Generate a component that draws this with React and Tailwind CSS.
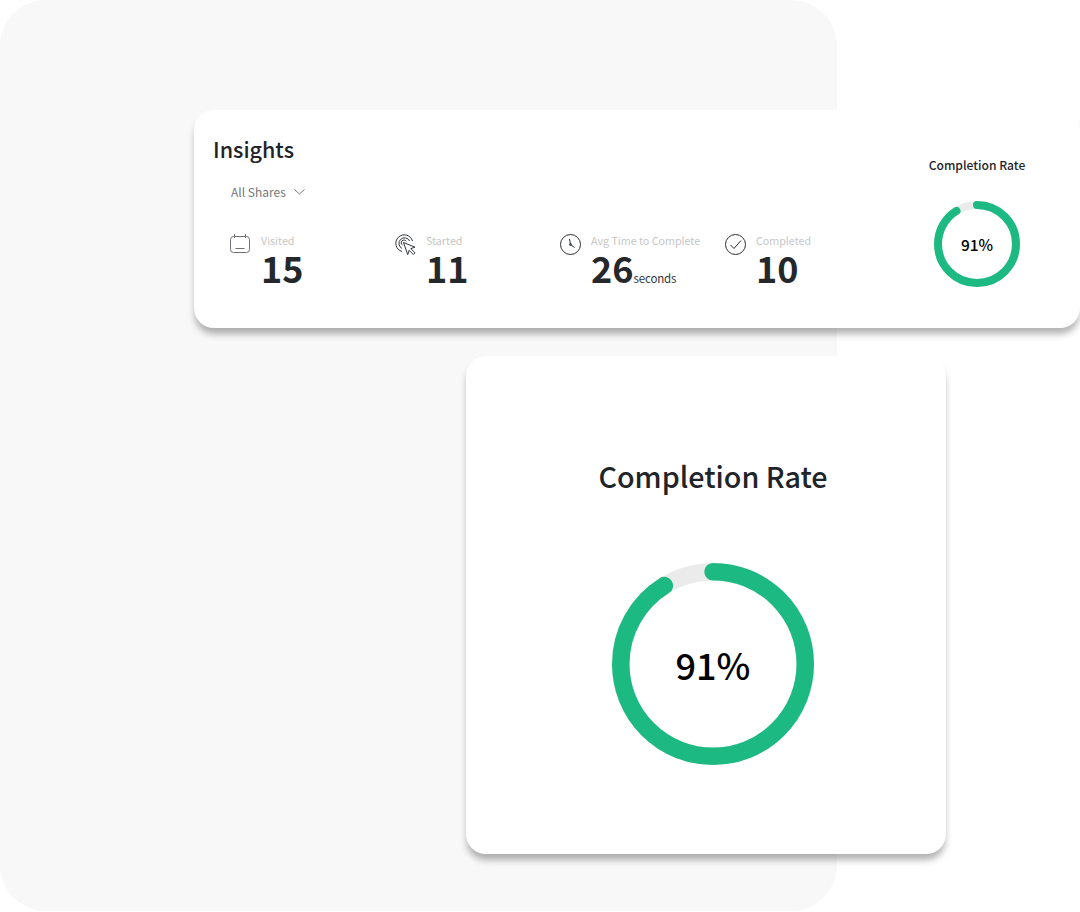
const font = { fontFamily: '"Noto Sans CJK JP", "Noto Sans", sans-serif' };

function CalendarIcon() {
  return (
    <svg width="22" height="20" viewBox="0 0 22 20" fill="none" stroke="#6b6f73" strokeWidth="1">
      <rect x="0.5" y="2.5" width="19" height="16" rx="3" />
      <path d="M4.5 0v4M15.5 0v4M5.5 14.5h9" />
    </svg>
  );
}

function PointerIcon() {
  return (
    <svg width="22" height="22" viewBox="0 0 22 22" fill="none" stroke="#33373b" strokeWidth="1">
      <path d="M7 17.5A8.5 8.5 0 1 1 17.5 7" />
      <path d="M7 14.4A5.6 5.6 0 1 1 14.6 7" />
      <path d="M7.5 11.2A2.8 2.8 0 1 1 11.4 7.4" />
      <path d="M8.5 8.5l11.5 4.7-4.3 1.4 4.3 4.2-1.7 1.7-4.2-4.2-1.4 4.3z" fill="#fff" strokeLinejoin="round" />
    </svg>
  );
}

function ClockIcon() {
  return (
    <svg width="22" height="22" viewBox="0 0 22 22" fill="none" stroke="#2b2f33" strokeWidth="1">
      <circle cx="10.5" cy="10.5" r="10" />
      <path d="M9.5 5l1 5.5 4 3" />
      <circle cx="10.5" cy="10.5" r="1" />
    </svg>
  );
}

function CheckIcon() {
  return (
    <svg width="22" height="22" viewBox="0 0 22 22" fill="none" stroke="#2b2f33" strokeWidth="1">
      <circle cx="10.5" cy="10.5" r="10" />
      <path d="M5.5 11l3.5 3.5 7-8" />
    </svg>
  );
}

function Ring({ size, stroke }) {
  const r = (size - stroke) / 2;
  const c = 2 * Math.PI * r;
  return (
    <svg width={size} height={size} viewBox={`0 0 ${size} ${size}`} fill="none" className="-rotate-90">
      <circle cx={size / 2} cy={size / 2} r={r} stroke="#ebebeb" strokeWidth={stroke} />
      <circle
        cx={size / 2}
        cy={size / 2}
        r={r}
        stroke="#1cb983"
        strokeWidth={stroke}
        strokeLinecap="round"
        strokeDasharray={`${c * 0.91} ${c}`}
      />
    </svg>
  );
}

function Stat({ icon, label, value, unit }) {
  return (
    <div className="flex w-[165px] gap-[9px]">
      <div className="w-[22px] pt-[1px] shrink-0">{icon}</div>
      <div className="flex flex-col">
        <span className="text-[10.7px] leading-[16px] text-[#c6c6c6] whitespace-nowrap">{label}</span>
        <span className="flex items-baseline text-[36px] leading-[36px] font-bold text-[#25282b]">
          {value}
          {unit && <span className="text-[11.5px] leading-[16px] font-normal tracking-[-0.15px] text-[#33373b]">{unit}</span>}
        </span>
      </div>
    </div>
  );
}

export default function App() {
  return (
    <div className="relative w-[1080px] h-[912px] overflow-hidden bg-white" style={font}>
      {/* grey backdrop */}
      <div className="absolute left-0 top-0 w-[837px] h-[911px] rounded-[46px] bg-[#f8f8f8]" />

      <div className="relative flex flex-col pt-[110px]">
        {/* Insights card */}
        <div className="ml-[194px] w-[886px] h-[218px] flex rounded-[20px] bg-white shadow-[0_7px_7px_-1px_rgba(0,0,0,0.3)]">
          <div className="flex-1 pl-[19px] pt-[23px]">
            <h2 className="text-[21.5px] leading-[32px] font-medium text-[#1f2429]">Insights</h2>
            <div className="flex items-center gap-[8px] ml-[18px] mt-[17px] text-[12px] leading-[20px] text-[#73777b]">
              All Shares
              <svg width="11" height="6" viewBox="0 0 11 6" fill="none" stroke="#73777b" strokeWidth="1">
                <path d="M.5.5l5 4.5 5-4.5" />
              </svg>
            </div>
            <div className="flex ml-[17px] mt-[31px]">
              <Stat icon={<CalendarIcon />} label="Visited" value="15" />
              <Stat icon={<PointerIcon />} label="Started" value="11" />
              <Stat icon={<ClockIcon />} label="Avg Time to Complete" value="26" unit="seconds" />
              <Stat icon={<CheckIcon />} label="Completed" value="10" />
            </div>
          </div>
          <div className="w-[206px] flex flex-col items-center pt-[46px] pr-[16px]">
            <span className="text-[12.1px] leading-[18px] font-medium text-[#1f2429]">Completion Rate</span>
            <div className="relative mt-[27px]">
              <Ring size={86} stroke={8} />
              <span className="absolute inset-0 pt-[1px] flex items-center justify-center text-[15.5px] font-medium text-black">91%</span>
            </div>
          </div>
        </div>

        {/* Completion rate card */}
        <div className="ml-[466px] mt-[28px] w-[480px] h-[498px] flex flex-col items-center pt-[98px] pl-[14px] rounded-[20px] bg-white shadow-[0_7px_7px_-1px_rgba(0,0,0,0.3)]">
          <h2 className="text-[28.7px] leading-[44px] font-medium text-[#1f2429]">Completion Rate</h2>
          <div className="relative mt-[65px]">
            <Ring size={202} stroke={17.5} />
            <span className="absolute inset-0 flex items-center justify-center text-[36px] font-medium text-black">91%</span>
          </div>
        </div>
      </div>
    </div>
  );
}
